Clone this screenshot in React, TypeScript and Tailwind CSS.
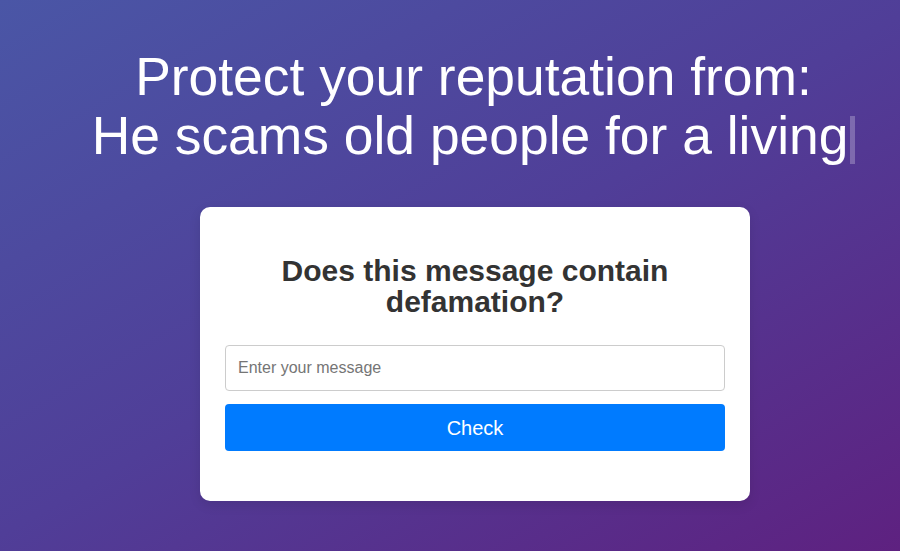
export default function App() {
  return (
    <div
      className="min-h-[551px] w-full overflow-hidden bg-[linear-gradient(150deg,#4a56a6_0%,#503e98_50%,#5e2180_100%)] pl-[50px]"
      style={{ fontFamily: '"Liberation Sans", Arial, sans-serif' }}
    >
      <div className="flex flex-col items-center pt-[47px]">
        {/* Typewriter headline */}
        <h1 className="mr-[3px] text-center text-[53.4px] leading-[59px] font-normal text-white">
          Protect your reputation from:
          <br />
          <span className="inline-block border-r-[5px] border-white/25 pr-[2px] pb-[9px] leading-[39px]">
            He scams old people for a living
          </span>
        </h1>

        <div className="mt-[42px] w-[550px] rounded-[10px] bg-white px-[25px] pt-[48px] pb-[50px] shadow-[0_4px_12px_rgba(0,0,0,0.1)]">
          <h2 className="text-center text-[30px] leading-[31px] font-bold text-[#333]">
            Does this message contain
            <br />
            defamation?
          </h2>

          <input
            type="text"
            placeholder="Enter your message"
            className="mt-[28px] block h-[46px] w-full rounded-[4px] border border-[#ccc] px-[12px] text-[16px] text-[#333] outline-none placeholder:text-[#757575]"
          />

          <button className="mt-[13px] block h-[47px] w-full rounded-[4px] bg-[#007bff] text-[20px] text-white">
            Check
          </button>
        </div>
      </div>
    </div>
  );
}
